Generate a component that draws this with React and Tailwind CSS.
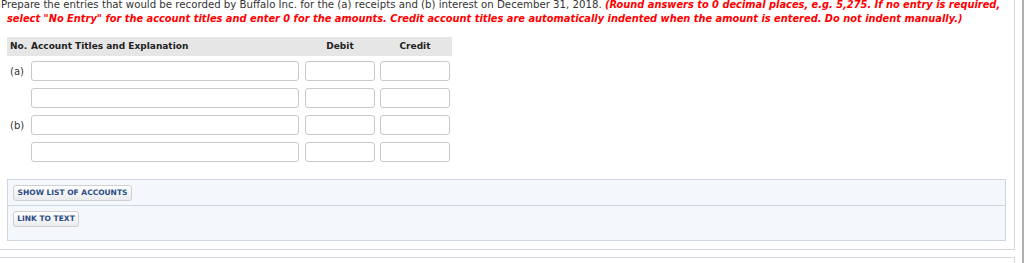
import React from "react";

function Row({ label }) {
  return (
    <div className="flex items-center h-[20px]">
      <div className="w-[24px] pl-[3px] text-[10px] text-[#333]">{label}</div>
      <div className="w-[268px] h-[20px] border border-[#c9c9c9] rounded-[3px] bg-white" />
      <div className="ml-[6px] w-[70px] h-[20px] border border-[#c9c9c9] rounded-[3px] bg-white" />
      <div className="ml-[5px] w-[70px] h-[20px] border border-[#c9c9c9] rounded-[3px] bg-white" />
    </div>
  );
}

function Btn({ children, w }) {
  return (
    <div
      className={`flex items-center justify-center h-[16px] ${w} border border-[#cfcfcf] rounded-[3px] bg-gradient-to-b from-white to-[#e9ebee] text-[7.5px] font-bold text-[#2b4c86] leading-none`}
    >
      {children}
    </div>
  );
}

export default function App() {
  return (
    <div className="relative w-[1024px] h-[263px] overflow-hidden bg-white font-['Verdana','DejaVu_Sans',sans-serif]">
      <div className="w-[1015px] border-r border-b border-[#d3d9e1] pb-[8px]">
        <p className="-mt-[2px] pl-[7px] -indent-[6px] text-[10.2px] leading-[14px] text-[#333] whitespace-nowrap">
          Prepare the entries that would be recorded by Buffalo Inc. for the (a) receipts and (b) interest on December 31, 2018.{" "}
          <span className="text-[#f00] font-bold italic text-[9.85px]">
            (Round answers to 0 decimal places, e.g. 5,275. If no entry is required,
            <br />
            select "No Entry" for the account titles and enter 0 for the amounts. Credit account titles are automatically indented when the amount is entered. Do not indent manually.)
          </span>
        </p>

        <div className="ml-[7px] mt-[11px] w-[445px] h-[19px] bg-[#e6e6e6] flex items-center text-[9px] font-bold text-[#222]">
          <div className="w-[24px] pl-[3px]">No.</div>
          <div className="w-[268px]">Account Titles and Explanation</div>
          <div className="ml-[6px] w-[70px] text-center">Debit</div>
          <div className="ml-[5px] w-[70px] text-center">Credit</div>
        </div>

        <div className="ml-[7px] mt-[5px] flex flex-col gap-[7px]">
          <Row label="(a)" />
          <Row label="" />
          <Row label="(b)" />
          <Row label="" />
        </div>

        <div className="ml-[7px] mt-[17px] w-[999px] border border-[#ced6e0] bg-[#f4f7fb]">
          <div className="flex pt-[5px] pb-[4px] pl-[5px] border-b border-[#ced6e0]">
            <Btn w="w-[119px]">SHOW LIST OF ACCOUNTS</Btn>
          </div>
          <div className="flex pt-[5px] pb-[13px] pl-[5px]">
            <Btn w="w-[66px]">LINK TO TEXT</Btn>
          </div>
        </div>
      </div>
      <div className="mt-[7px] w-[1015px] h-[20px] border-t border-r border-[#d3d9e1]" />
      <div className="absolute top-0 left-[1022px] w-[2px] h-[263px] bg-[#b0b0b0]" />
    </div>
  );
}
